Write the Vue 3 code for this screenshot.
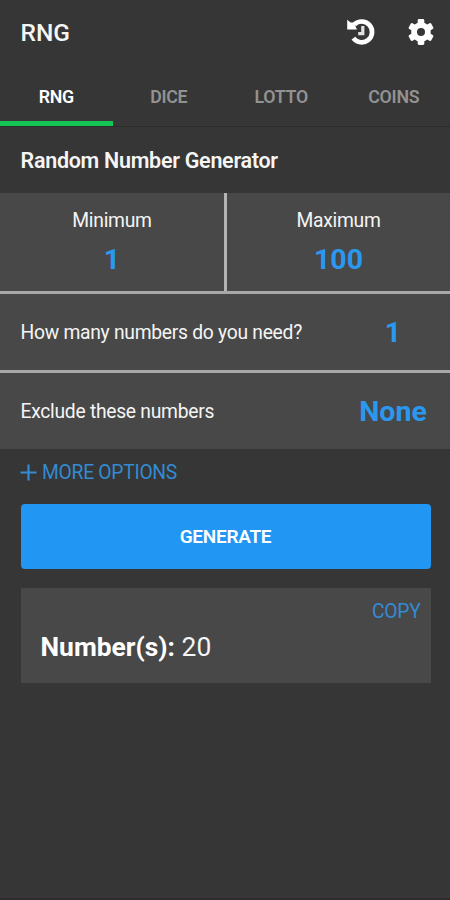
<style scoped>
.app {
  display: flex;
  flex-direction: column;
  box-sizing: border-box;
  width: 100%;
  height: 900px;
  overflow: hidden;
  background-color: #363636;
  border-bottom: 2px solid #2c2b2d;
  color: #f5f5f5;
  font-family: Roboto, sans-serif;
  font-size: 19.3px;
  letter-spacing: -0.28px;
}

button {
  margin: 0;
  padding: 0;
  border: none;
  background: none;
  color: inherit;
  font: inherit;
  letter-spacing: inherit;
  cursor: pointer;
}

.toolbar {
  display: flex;
  align-items: center;
  justify-content: space-between;
  flex: none;
  box-sizing: border-box;
  height: 66px;
  padding: 0 14px 2px 20.5px;
}

.toolbar h1 {
  margin: 0;
  font-size: 24.5px;
  font-weight: 500;
  letter-spacing: 0;
}

.actions {
  display: flex;
  gap: 30px;
}

.actions button {
  display: flex;
}

.tabs {
  display: grid;
  grid-template-columns: repeat(4, 1fr);
  box-sizing: border-box;
  flex: none;
  height: 61px;
  border-bottom: 1px solid #2c2c2c;
}

.tabs button {
  box-sizing: border-box;
  border-top: 5px solid transparent;
  border-bottom: 5px solid transparent;
  color: #929292;
  font-size: 17.8px;
  font-weight: 600;
}

.tabs button.active {
  border-bottom-color: #14c456;
  color: #fff;
}

.title {
  flex: none;
  margin: 0;
  height: 66px;
  padding-left: 20.5px;
  font-size: 21.5px;
  font-weight: 600;
  line-height: 67px;
}

.limits {
  display: grid;
  grid-template-columns: 224px 1fr;
  flex: none;
  height: 98px;
  background-color: #484848;
}

.limit {
  display: flex;
  flex-direction: column;
  align-items: center;
  padding-top: 14px;
}

.limit + .limit {
  border-left: 3px solid #b4b4b4;
}

.limit span {
  line-height: 28px;
}

.value {
  color: #2b98ef;
  font-size: 28.5px;
  font-weight: 700;
  letter-spacing: 0;
}

.limit .value {
  margin-top: 6px;
  line-height: 37px;
}

.option {
  display: flex;
  align-items: center;
  justify-content: space-between;
  flex: none;
  height: 76px;
  padding: 0 22px 0 20.5px;
  border-top: 3px solid #a8a8a8;
  background-color: #484848;
}

.option .value {
  min-width: 70px;
  text-align: center;
}

.more {
  display: flex;
  align-items: center;
  flex: none;
  align-self: flex-start;
  height: 46px;
  margin-left: 20px;
  gap: 5px;
  color: #338bd3;
}

.generate {
  flex: none;
  height: 65px;
  margin: 9px 19.5px 0 20.5px;
  border-radius: 4px;
  background-color: #2196f3;
  color: #fff;
  font-size: 19px;
  font-weight: 600;
}

.result {
  display: flex;
  flex-direction: column;
  box-sizing: border-box;
  flex: none;
  height: 95px;
  margin: 19px 19.5px 0 20.5px;
  padding: 11px 10px 0 20px;
  background-color: #484848;
}

.copy {
  align-self: flex-end;
  color: #338bd3;
  line-height: 26px;
}

.result p {
  margin: 5px 0 0;
  font-size: 26.4px;
  line-height: 34px;
  letter-spacing: 0;
}

.result strong {
  color: #fff;
  font-weight: 700;
}
</style>

<template>
  <div class="app">
    <header class="toolbar">
      <h1>RNG</h1>
      <div class="actions">
        <button aria-label="History">
          <svg width="30" height="30" viewBox="0 0 30 30" fill="none" stroke="#fff">
            <path d="M8.3 7.6A10.4 10.4 0 1 1 7.4 21.2" stroke-width="4.7" />
            <path d="M1.2 2.8L4.6 5.6L7.6 5.4L11 12.6H1.2Z" fill="#fff" stroke="none" />
            <path d="M16.8 9V16.6H12.2" stroke="#e2e2e2" stroke-width="3.2" />
          </svg>
        </button>
        <button aria-label="Settings">
          <svg width="30" height="30" viewBox="0 0 30 30" fill="none">
            <circle cx="15" cy="15" r="6.9" stroke="#fff" stroke-width="5.8" />
            <g fill="#fff">
              <rect
                v-for="n in 6"
                :key="n"
                x="11.7"
                y="2"
                width="6.6"
                height="6"
                rx="1.4"
                :transform="`rotate(${n * 60} 15 15)`"
              />
            </g>
          </svg>
        </button>
      </div>
    </header>

    <nav class="tabs">
      <button
        v-for="tab in tabs"
        :key="tab"
        :class="{ active: tab === activeTab }"
        @click="activeTab = tab"
      >
        {{ tab }}
      </button>
    </nav>

    <h2 class="title">Random Number Generator</h2>

    <div class="limits">
      <div class="limit">
        <span>Minimum</span>
        <span class="value">{{ minimum }}</span>
      </div>
      <div class="limit">
        <span>Maximum</span>
        <span class="value">{{ maximum }}</span>
      </div>
    </div>

    <div v-for="option in options" :key="option.label" class="option">
      <span>{{ option.label }}</span>
      <span class="value">{{ option.value }}</span>
    </div>

    <button class="more">
      <svg width="17" height="17" viewBox="0 0 17 17" stroke="#338bd3" stroke-width="2.2">
        <path d="M8.5 0.5V16.5M0.5 8.5H16.5" />
      </svg>
      <span>MORE OPTIONS</span>
    </button>

    <button class="generate" @click="generate">GENERATE</button>

    <div class="result">
      <button class="copy">COPY</button>
      <p><strong>Number(s):</strong> {{ result }}</p>
    </div>
  </div>
</template>

<script setup>
import { ref } from 'vue';

const tabs = ['RNG', 'DICE', 'LOTTO', 'COINS'];
const activeTab = ref('RNG');

const minimum = ref(1);
const maximum = ref(100);
const result = ref(20);

const options = ref([
  { label: 'How many numbers do you need?', value: '1' },
  { label: 'Exclude these numbers', value: 'None' },
]);

const generate = () => {
  const range = maximum.value - minimum.value + 1;
  result.value = minimum.value + Math.floor(Math.random() * range);
};
</script>

<style>
body {
  background-color: #363636;
}
</style>
